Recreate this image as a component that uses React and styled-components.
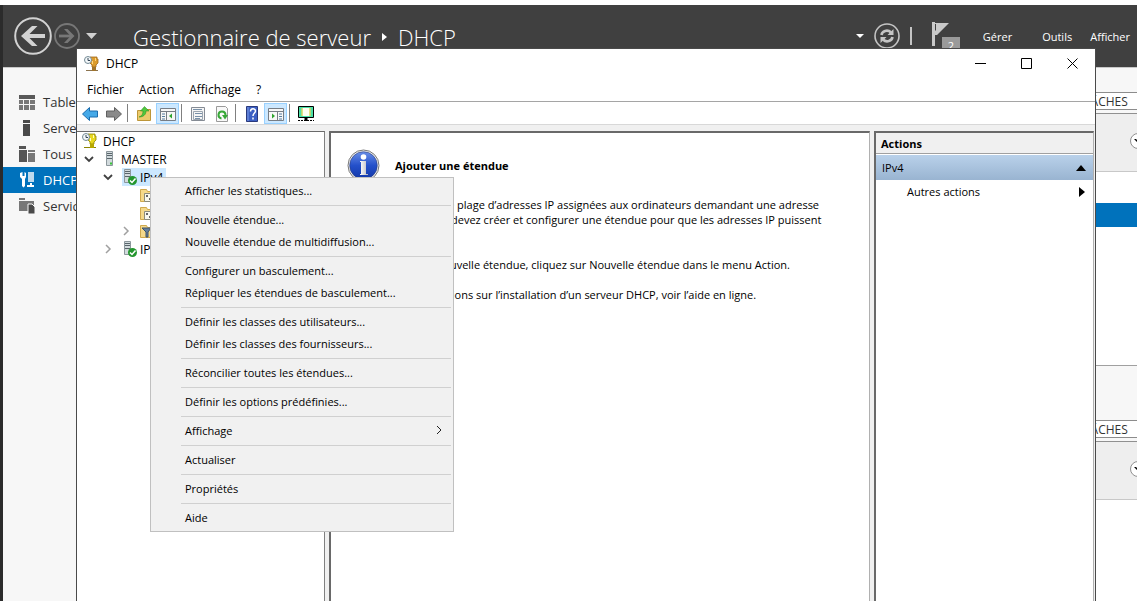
import React from "react";
import styled, { createGlobalStyle, css } from "styled-components";

const Global = createGlobalStyle`
  * { box-sizing: border-box; }
  html, body { margin: 0; height: 100%; }
  body { font-family: "Open Sans", "Segoe UI", sans-serif; font-size: 11px; line-height: 15px; color: #000; overflow: hidden; }
  button { font: inherit; color: inherit; background: none; border: 0; padding: 0; margin: 0; text-align: left; white-space: nowrap; }
  svg { display: block; flex: none; }
  ul { list-style: none; margin: 0; padding: 0; }
  h1, h2, p { margin: 0; }
`;

/* ---------- server manager ---------- */
const Desktop = styled.div`
  position: relative;
  height: 100vh;
  display: flex;
  flex-direction: column;
  overflow: hidden;
  background: #f7f7f7;
  border-top: 5px solid #fff;
`;
const Frame = styled.div`
  flex: 1;
  display: flex;
  flex-direction: column;
  border-left: 3px solid #2b2b2b;
`;
const Header = styled.header`
  height: 62px;
  flex: none;
  display: flex;
  align-items: center;
  background: #404040;
  color: #fff;
  padding: 0 7px 0 11px;
`;
const RoundButtons = styled.div`
  display: flex;
  align-items: center;
  gap: 2px;
  width: 119px;
`;
const Breadcrumb = styled.h1`
  flex: 1;
  display: flex;
  align-items: center;
  gap: 11px;
  padding-top: 2px;
  font-size: 22px;
  line-height: 30px;
  font-weight: 300;
  white-space: nowrap;
`;
const HeaderTools = styled.div`
  display: flex;
  align-items: center;
  gap: 10px;
  margin-right: 23px;
`;
const Rule = styled.span`
  width: 2px;
  height: 18px;
  background: #c4c4c4;
`;
const Flag = styled.div`
  position: relative;
  margin-left: 10px;
  width: 28px;
  height: 28px;
`;
const Count = styled.span`
  position: absolute;
  left: 10px;
  top: 15px;
  width: 18px;
  height: 18px;
  background: #9a9a9a;
  text-align: center;
  line-height: 17px;
`;
const HeaderMenu = styled.nav`
  display: flex;
  gap: 30px;
  & > :last-child { margin-left: -12px; }
`;
const Columns = styled.div`
  flex: 1;
  display: grid;
  grid-template-columns: 180px 1fr;
`;
const Sidebar = styled.ul`
  padding-top: 21px;
  border-top: 1px solid #c8c8c8;
`;
const SideItem = styled.button`
  display: flex;
  align-items: center;
  gap: 7px;
  width: 100%;
  height: 26px;
  padding-left: 16px;
  font-size: 13px;
  color: ${(p) => (p.$active ? "#fff" : "#333")};
  background: ${(p) => (p.$active ? "#0072bc" : "none")};
`;
const Tiles = styled.div`
  display: flex;
  flex-direction: column;
  padding-top: 24px;
  border-top: 1px solid #c8c8c8;
`;
const Tile = styled.section`
  height: 274px;
  flex: none;
  display: flex;
  flex-direction: column;
  background: #fff;
  border-bottom: 1px solid #a0a0a0;
`;
const TileHead = styled.div`
  height: 21px;
  display: flex;
  justify-content: flex-end;
  background: #f7f7f7;
`;
const TasksButton = styled.button`
  height: 18px;
  width: 66px;
  padding-left: 12px;
  border: 1px solid #8c8c8c;
  border-right: 0;
  background: #fff;
  color: #333;
  font-size: 12px;
`;
const TileFilter = styled.div`
  height: 59px;
  display: flex;
  justify-content: flex-end;
  align-items: center;
  overflow: hidden;
  background: #eee;
  border-top: 1px solid #909090;
  border-bottom: 1px solid #c8c8c8;
`;
const Expander = styled.button`
  width: 16px;
  height: 16px;
  margin-right: -9px;
  margin-bottom: 4px;
  border: 1px solid #909090;
  border-radius: 50%;
  background: #fff;
  display: grid;
  place-items: center;
`;
const SelectedRow = styled.div`
  height: 24px;
  margin-top: 31px;
  background: #0072bc;
`;
const Gap = styled.div`
  height: 54px;
`;

/* ---------- DHCP console ---------- */
const Window = styled.section`
  position: absolute;
  left: 76px;
  right: 41px;
  top: 43px;
  bottom: 0;
  display: flex;
  flex-direction: column;
  background: #fff;
  border: 1px solid #4a4a4a;
  border-bottom: 0;
`;
const TitleBar = styled.div`
  height: 29px;
  flex: none;
  display: flex;
  align-items: center;
  padding-left: 7px;
`;
const WindowTitle = styled.h2`
  flex: 1;
  margin-left: 6px;
  font-size: 12px;
  font-weight: 400;
`;
const WindowButton = styled.button`
  width: 46px;
  height: 28px;
  display: grid;
  place-items: center;
`;
const MenuBar = styled.nav`
  height: 24px;
  flex: none;
  display: flex;
  align-items: center;
  gap: 15px;
  padding-left: 10px;
  font-size: 12px;
  border-bottom: 1px solid #a5a5a5;
`;
const Toolbar = styled.div`
  height: 23px;
  flex: none;
  display: flex;
  align-items: flex-end;
  gap: 1px;
  padding-left: 1px;
  border-bottom: 1px solid #d8d8d8;
`;
const Tool = styled.button`
  width: 23px;
  height: 21px;
  display: grid;
  place-items: center;
  ${(p) => p.$on && css`
    background: #cce8ff;
    border: 1px solid #99d1ff;
  `}
`;
const Separator = styled.span`
  width: 1px;
  height: 18px;
  margin: 0 3px 2px 1px;
  background: #808080;
`;
const Panes = styled.div`
  flex: 1;
  display: grid;
  grid-template-columns: 248px 1fr 220px;
  gap: 4px;
  padding: 6px 1px 0 0;
  background: #f0f0f0;
`;
const Pane = styled.div`
  background: #fff;
  border: solid #696969;
  border-width: 2px 1px 0 2px;
  border-right-color: #b0b0b0;
  overflow: hidden;
`;
const TreePane = styled(Pane)`
  border-left: 0;
  border-top-width: 1px;
  border-right-color: #808080;
  font-size: 12px;
`;
const TreeRow = styled.li`
  height: 18px;
  display: flex;
  align-items: center;
  padding-left: ${(p) => p.$indent}px;
`;
const Twist = styled.span`
  width: 12px;
  margin-right: 8px;
`;
const TreeLabel = styled.button`
  height: 18px;
  display: flex;
  align-items: center;
  gap: ${(p) => (p.$root ? 5 : 2)}px;
  padding-right: 3px;
  ${(p) => p.$selected && css`
    background: #cce8ff;
  `}
`;
const Intro = styled.div`
  display: flex;
  align-items: center;
  gap: 15px;
  height: 32px;
  font-weight: 700;
`;
const HelpPane = styled(Pane)`
  padding: 16px;
`;
const HelpText = styled.p`
  margin-top: ${(p) => (p.$first ? 16 : 15)}px;
  white-space: nowrap;
`;
const ActionsTitle = styled.h2`
  height: 21px;
  padding: 0 5px;
  font-size: 11px;
  line-height: 21px;
  font-weight: 700;
  background: #f0f0f0;
  border-bottom: 1px solid #a0a0a0;
`;
const ActionGroup = styled.button`
  width: 100%;
  height: 25px;
  margin-top: 1px;
  padding: 0 7px 0 6px;
  display: flex;
  align-items: center;
  justify-content: space-between;
  background: linear-gradient(#b9d1ea, #99b4d1);
`;
const ActionItem = styled.button`
  width: 100%;
  height: 23px;
  padding: 0 8px 0 31px;
  display: flex;
  align-items: center;
  justify-content: space-between;
`;

/* ---------- context menu ---------- */
const ContextMenu = styled.ul`
  position: absolute;
  left: 150px;
  top: 172px;
  width: 304px;
  padding: 2px 1px;
  background: #f1f1f1;
  border: 1px solid #c0c0c0;
`;
const MenuItem = styled.button`
  width: 100%;
  height: 22px;
  padding: 0 10px 2px 33px;
  display: flex;
  align-items: center;
  justify-content: space-between;
`;
const MenuRule = styled.li`
  height: 1px;
  margin: 3px 1px 3px 29px;
  background: #d0d0d0;
`;

/* ---------- drawings ---------- */
const BackIcon = () => (
  <svg width="38" height="38" viewBox="0 0 38 38" fill="none" stroke="#d2d2d2">
    <circle cx="19" cy="19" r="17.8" strokeWidth="2" />
    <path d="M31 19H10" strokeWidth="4" />
    <path d="M18 9h5.500L13.500 19l10 10H18L7 19z" fill="#d2d2d2" stroke="none" />
  </svg>
);
const ForwardIcon = () => (
  <svg width="26" height="26" viewBox="0 0 26 26" fill="none" stroke="#777">
    <circle cx="13" cy="13" r="12" strokeWidth="1.800" />
    <path d="M5 13h13" strokeWidth="2.800" />
    <path d="M13.500 6H10l6.500 7-6.500 7h3.500l7-7z" fill="#777" stroke="none" />
  </svg>
);
const Triangle = ({ w, h, d, color = "#000", ...rest }) => (
  <svg width={w} height={h} viewBox={`0 0 ${w} ${h}`} fill={color} {...rest}><path d={d} /></svg>
);
const RefreshIcon = () => (
  <svg width="26" height="26" viewBox="0 0 26 26" fill="none" stroke="#c4c4c4">
    <circle cx="13" cy="13" r="12" strokeWidth="1.600" />
    <path d="M7.500 12c.5-4 6-6 9.500-2.500M18.500 14c-.5 4-6 6-9.500 2.500" strokeWidth="2.600" />
    <path d="M19.500 6v6h-6zM6.500 20v-6h6z" fill="#c4c4c4" stroke="none" />
  </svg>
);
const FlagIcon = () => (
  <svg width="20" height="26" viewBox="0 0 20 26" fill="#c8c8c8">
    <path d="M0 0h3v24H0zM3 1h14L5 13H3z" /><path d="M3.500 2v6.500" stroke="#404040" />
  </svg>
);
const SideIcons = {
  dashboard: <g fill="#595959"><path d="M0 1h16v4H0z" /><path d="M0 6h4v4H0zM0 11h4v5H0zM5 6h5v4H5zM5 11h5v5H5zM11 6h5v4h-5zM11 11h5v5h-5z" fill="#777" /></g>,
  server: <g fill="#4a4a4a"><path d="M4 0h7v3H4zM4 4h7v12H4z" /></g>,
  all: <g fill="#555"><path d="M0 0h7v3H0zM0 4h8v12H0z" /><path d="M9 4h7v2H9zM9 7h7v9H9z" fill="#777" /></g>,
  dhcp: <g fill="#fff"><path d="M1 1v4l2 2v7l1.500 1.500L6 14V7l1-2V1L5.500 0v4h-2V0z" /><path d="M9 0h6v10H9z" opacity=".75" /><path d="M11 11h2v2h2v2H8v-2h3z" /></g>,
  files: <g fill="#777"><path d="M0 0h6v2H0zM0 3h15v4H9v6H0z" /><path d="M9 6h4l3 3v7H9z" fill="#4a4a4a" stroke="#f7f7f7" /></g>,
};
const SideIcon = ({ name }) => <svg width="17" height="17" viewBox="0 0 17 17">{SideIcons[name]}</svg>;

const DhcpIcon = ({ tree }) => (
  <svg width="16" height="16" viewBox="0 0 16 16">
    <path d="M6 1h7v2h1v4l-2 2v2H8V9L5 6z" fill={tree ? "#e8d820" : "#dc9c2c"} stroke={tree ? "#8c8400" : "#a0681c"} strokeWidth=".8" />
    <path d="M8.500 5v3M11.500 2v3" stroke={tree ? "#fffbc0" : "#ffd780"} />
    <path d="M2 14.500h12" stroke={tree ? "#8c8400" : "#8c7450"} />
    <path d="M8 11v4h4v-4z" fill={tree ? "#b8a800" : "#a0742c"} />
    <circle cx="4" cy="4" r="3.500" fill="#f4f8fa" stroke="#738994" /><path d="M4 2v2.500h2" fill="none" stroke="#345" />
  </svg>
);
const ServerIcon = ({ check }) => (
  <svg width="16" height="18" viewBox="0 0 16 18">
    <path d={check ? "M2.500 1.500h6v13h-6z" : "M3.500 1.500h6v14h-6z"} fill="#d2dadd" stroke="#8c979c" />
    <path d={check ? "M3 3.500h5M3 5.500h5M3 8.500h5" : "M4 3.500h5M4 5.500h5M4 8.500h5"} stroke="#59656b" />
    {check ? (
      <><circle cx="10.500" cy="12.500" r="4.500" fill="#23962e" /><path d="M8 12.500l2 2 3.500-4" fill="none" stroke="#fff" strokeWidth="1.500" /></>
    ) : <path d="M7 13.500h2" stroke="#38c438" strokeWidth="2" />}
  </svg>
);
const FolderIcon = ({ kind }) => (
  <svg width="16" height="16" viewBox="0 0 16 16">
    <path d="M.5 2.500h6l1 2h8v10H.500z" fill="#f5d98a" stroke="#cfa94e" />
    {kind === "filter"
      ? <path d="M2 5h9l-3 4v5H6V9z" fill="#657f9b" stroke="#3e5368" />
      : <><path d="M4.500 6.500h9v8h-9z" fill="#f8f8ee" stroke="#8c8c7c" /><path d="M6 8h2v2H6zM9 11h2v2H9z" fill="#666" /></>}
  </svg>
);
const Chevron = ({ open }) => (
  <svg width="12" height="12" viewBox="0 0 12 12" fill="none" stroke={open ? "#404040" : "#a0a0a0"} strokeWidth={open ? 1.8 : 1.5}>
    <path d={open ? "M2 4l4 4 4-4" : "M4 2l4 4-4 4"} />
  </svg>
);
const InfoIcon = () => (
  <svg width="33" height="33" viewBox="0 0 33 33">
    <defs>
      <linearGradient id="infoBlue" x2="0" y2="1"><stop stopColor="#6a8fe8" /><stop offset=".5" stopColor="#2450ca" /><stop offset="1" stopColor="#1237a8" /></linearGradient>
      <linearGradient id="infoStem"><stop stopColor="#fff" /><stop offset="1" stopColor="#b8b8c0" /></linearGradient>
    </defs>
    <circle cx="16.500" cy="16.500" r="15.500" fill="#f0f0f0" stroke="#777" />
    <circle cx="16.500" cy="16.500" r="13.800" fill="url(#infoBlue)" stroke="#2a3d7c" strokeWidth=".6" />
    <circle cx="16.500" cy="8" r="2.800" fill="#fff" />
    <path d="M13 12h6v13h2v1h-8v-1h1V13h-1z" fill="url(#infoStem)" />
  </svg>
);
const toolShapes = {
  back: <path d="M0.500 8l7-6.500v3.500h8v6h-8v3.500z" fill="#45a9e8" stroke="#1b6cae" />,
  forward: <path d="M15.500 8l-7-6.500v3.500h-8v6h8v3.500z" fill="#8a8a8a" stroke="#606060" />,
  up: <g><path d="M1.500 4.500h7l1-1h5v11h-13z" fill="#eccb6c" stroke="#bd9638" /><path d="M3 11c3-1 4-3 4-6H4.500l4-4.500 4.500 4.500H10c0 4-3 6-7 6z" fill="#4fc73f" stroke="#24881a" strokeWidth=".5" /></g>,
  tree: <g><path d="M.5 2.500h15v12H.5z" fill="#f7f7f7" stroke="#777d85" /><path d="M1 5.500h14M6.500 6v8" stroke="#777d85" /><path d="M2 8h3M2 10.500h3M2 13h3" stroke="#567da0" /><path d="M12 7.500v5L9 10z" fill="#2fa32f" /></g>,
  props: <g><path d="M1.500 1.500h13v13h-13z" fill="#f5f5f5" stroke="#858b94" /><path d="M3 3.500h9M5 7.500h7M5 10.500h7M5 12.500h5" stroke="#7890a8" /><path d="M3.500 5.500h9v8h-9z" fill="none" stroke="#9ca6b0" /></g>,
  refresh: <g><path d="M2.500.5h9l2 2v13h-11z" fill="#f8f8f8" stroke="#9a9a9a" /><path d="M7.500 12.500A3.500 3.500 0 1 1 11.500 9" fill="none" stroke="#38a838" strokeWidth="2" /><path d="M8 9h6l-3 4.500z" fill="#38a838" /></g>,
  help: <g><path d="M2.500.5h11v15h-11z" fill="#3c60c4" stroke="#29397c" /><path d="M4 1v14" stroke="#7d9ae4" /><path d="M6.500 5.500c0-3.500 5-3.500 5-.5 0 2-2.500 2-2.500 5M9 11.500v2" fill="none" stroke="#fff" strokeWidth="1.500" /></g>,
  actions: <g><path d="M.5 2.500h15v12H.5z" fill="#f7f7f7" stroke="#777d85" /><path d="M1 5.500h14M9.500 6v8" stroke="#777d85" /><path d="M11 8h3M11 10.500h3M11 13h3" stroke="#567da0" /><path d="M4 7.500v5l3-2.500z" fill="#2fa32f" /></g>,
  monitor: <g><path d="M.5.500h15v11H.5z" fill="#4ce0a8" stroke="#000" /><path d="M3.500 2h9v8h-9z" fill="#fffff0" /><path d="M4 2.500v7M12 2.500v7" stroke="#c5bd18" strokeWidth="2" strokeDasharray="1 1" /><path d="M8 12v3" stroke="#000" strokeWidth="3" /><path d="M0 14.500h16" stroke="#000" strokeDasharray="2 1" /></g>,
};
const ToolIcon = ({ name }) => (
  <svg width="16" height="16" viewBox="0 0 16 16">{toolShapes[name]}</svg>
);

const sideItems = [
  ["dashboard", "Tableau de bord"],
  ["server", "Serveur local"],
  ["all", "Tous les serveurs"],
  ["dhcp", "DHCP"],
  ["files", "Services de fichiers"],
];
const tools = [
  ["back", "Précédent"], ["forward", "Suivant"], null,
  ["up", "Dossier parent"], ["tree", "Arborescence", true], null,
  ["props", "Propriétés"], ["refresh", "Actualiser"], null,
  ["help", "Aide"], ["actions", "Volet Actions", true], null,
  ["monitor", "Serveur"],
];
const menuGroups = [
  ["Afficher les statistiques..."],
  ["Nouvelle étendue...", "Nouvelle étendue de multidiffusion..."],
  ["Configurer un basculement...", "Répliquer les étendues de basculement..."],
  ["Définir les classes des utilisateurs...", "Définir les classes des fournisseurs..."],
  ["Réconcilier toutes les étendues..."],
  ["Définir les options prédéfinies..."],
  ["Affichage"],
  ["Actualiser"],
  ["Propriétés"],
  ["Aide"],
];
const treeRows = [
  { indent: 6, open: true, icon: <ServerIcon />, label: "MASTER" },
  { indent: 25, open: true, icon: <ServerIcon check />, label: "IPv4", selected: true },
  { indent: 43, icon: <FolderIcon />, label: "Options de serveur", leaf: true },
  { indent: 43, icon: <FolderIcon />, label: "Stratégies", leaf: true },
  { indent: 43, icon: <FolderIcon kind="filter" />, label: "Filtres" },
  { indent: 25, icon: <ServerIcon check />, label: "IPv6" },
];

const TasksTile = ({ selected }) => (
  <Tile>
    <TileHead><TasksButton>TÂCHES</TasksButton></TileHead>
    <TileFilter>
      <Expander aria-label="Développer"><Triangle w={8} h={6} d="M0 1l4 4 4-4H6L4 3 2 1z" /></Expander>
    </TileFilter>
    {selected && <SelectedRow />}
  </Tile>
);

export default function App() {
  return (
    <>
      <Global />
      <Desktop>
        <Frame>
          <Header>
            <RoundButtons>
              <button aria-label="Retour"><BackIcon /></button>
              <button aria-label="Avancer"><ForwardIcon /></button>
              <Triangle w={18} h={8} color="#d0d0d0" d="M4 1h11L9.500 7z" />
            </RoundButtons>
            <Breadcrumb>
              <span>Gestionnaire de serveur</span>
              <Triangle w={5} h={8} color="#fff" d="M0 0l5 4-5 4z" />
              <span>DHCP</span>
            </Breadcrumb>
            <HeaderTools>
              <Triangle w={8} h={5} color="#fff" d="M0 0h8L4 4z" />
              <button aria-label="Actualiser"><RefreshIcon /></button>
              <Rule />
              <Flag><FlagIcon /><Count>2</Count></Flag>
            </HeaderTools>
            <HeaderMenu>
              <button>Gérer</button>
              <button>Outils</button>
              <button>Afficher</button>
            </HeaderMenu>
          </Header>
          <Columns>
            <Sidebar>
              {sideItems.map(([icon, label]) => (
                <li key={icon}><SideItem $active={icon === "dhcp"}><SideIcon name={icon} />{label}</SideItem></li>
              ))}
            </Sidebar>
            <Tiles>
              <TasksTile selected />
              <Gap />
              <TasksTile />
            </Tiles>
          </Columns>
        </Frame>

        <Window>
          <TitleBar>
            <DhcpIcon />
            <WindowTitle>DHCP</WindowTitle>
            <WindowButton aria-label="Réduire"><svg width="11" height="11" stroke="#000"><path d="M0 5.500h11" /></svg></WindowButton>
            <WindowButton aria-label="Agrandir"><svg width="11" height="11" stroke="#000" fill="none"><path d="M.5.500h10v10H.5z" /></svg></WindowButton>
            <WindowButton aria-label="Fermer"><svg width="11" height="11" stroke="#000"><path d="M.5.500l10 10M10.500.500l-10 10" /></svg></WindowButton>
          </TitleBar>
          <MenuBar>
            <button>Fichier</button><button>Action</button><button>Affichage</button><button>?</button>
          </MenuBar>
          <Toolbar>
            {tools.map((t, i) => t
              ? <Tool key={i} aria-label={t[1]} $on={t[2]}><ToolIcon name={t[0]} /></Tool>
              : <Separator key={i} />)}
          </Toolbar>
          <Panes>
            <TreePane as="ul">
              <TreeRow $indent={5}><TreeLabel $root><DhcpIcon tree />DHCP</TreeLabel></TreeRow>
              {treeRows.map((r) => (
                <TreeRow key={r.label} $indent={r.indent}>
                  <Twist>{!r.leaf && <Chevron open={r.open} />}</Twist>
                  <TreeLabel $selected={r.selected}>{r.icon}{r.label}</TreeLabel>
                </TreeRow>
              ))}
            </TreePane>
            <HelpPane>
              <Intro><InfoIcon />Ajouter une étendue</Intro>
              <HelpText $first>
                Une étendue est une plage d’adresses IP assignées aux ordinateurs demandant une adresse<br />
                IP dynamique. Vous devez créer et configurer une étendue pour que les adresses IP puissent<br />
                être assignées.
              </HelpText>
              <HelpText>Pour ajouter une nouvelle étendue, cliquez sur Nouvelle étendue dans le menu Action.</HelpText>
              <HelpText>Pour plus d’informations sur l’installation d’un serveur DHCP, voir l’aide en ligne.</HelpText>
            </HelpPane>
            <Pane>
              <ActionsTitle>Actions</ActionsTitle>
              <ActionGroup>IPv4<Triangle w={10} h={6} d="M5 0l5 6H0z" /></ActionGroup>
              <ActionItem>Autres actions<Triangle w={6} h={10} d="M0 0l6 5-6 5z" /></ActionItem>
            </Pane>
          </Panes>
        </Window>

        <ContextMenu>
          {menuGroups.map((group, i) => (
            <React.Fragment key={i}>
              {i > 0 && <MenuRule />}
              {group.map((label) => (
                <li key={label}>
                  <MenuItem>
                    {label}
                    {label === "Affichage" && (
                      <svg width="6" height="10" fill="none" stroke="#222"><path d="M1 1l4 4-4 4" /></svg>
                    )}
                  </MenuItem>
                </li>
              ))}
            </React.Fragment>
          ))}
        </ContextMenu>
      </Desktop>
    </>
  );
}
